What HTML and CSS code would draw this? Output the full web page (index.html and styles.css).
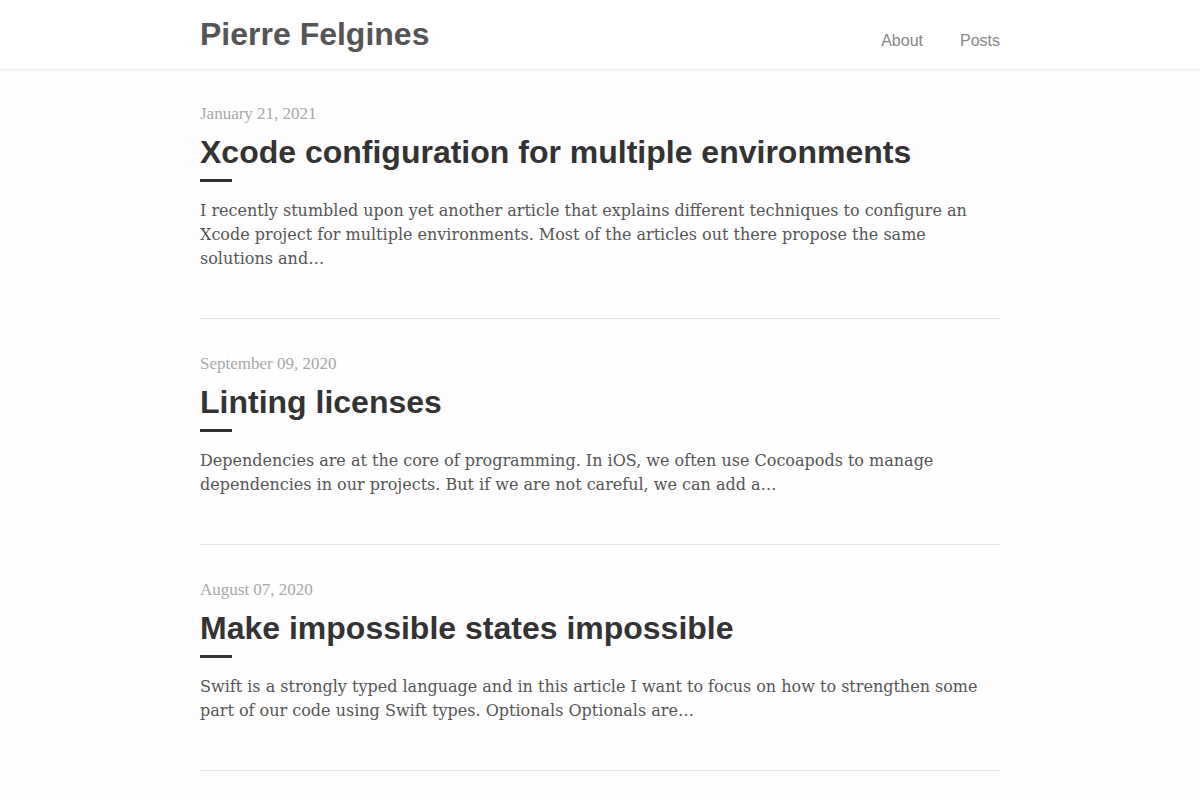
FILE: index.html
```html
<!DOCTYPE html>
<html lang="en">
    <head>
        <meta charset="UTF-8" />
        <meta name="viewport" content="width=device-width, initial-scale=1" />
        <title>Pierre Felgines</title>
        <link rel="stylesheet" href="styles.css">
    </head>
    <body>
        <header class="site-header">
            <div class="wrapper header-inner">
                <a class="site-title" href="#">Pierre Felgines</a>
                <nav class="site-nav">
                    <a href="#">About</a>
                    <a href="#">Posts</a>
                </nav>
            </div>
        </header>

        <main class="wrapper">
            <article class="post">
                <p class="post-date">January 21, 2021</p>
                <h2 class="post-title"><a href="#">Xcode configuration for multiple environments</a></h2>
                <p class="post-excerpt">
                    I recently stumbled upon yet another article that explains different techniques to configure an
                    Xcode project for multiple environments. Most of the articles out there propose the same
                    solutions and…
                </p>
            </article>
            <article class="post">
                <p class="post-date">September 09, 2020</p>
                <h2 class="post-title"><a href="#">Linting licenses</a></h2>
                <p class="post-excerpt">
                    Dependencies are at the core of programming. In iOS, we often use Cocoapods to manage
                    dependencies in our projects. But if we are not careful, we can add a…
                </p>
            </article>
            <article class="post">
                <p class="post-date">August 07, 2020</p>
                <h2 class="post-title"><a href="#">Make impossible states impossible</a></h2>
                <p class="post-excerpt">
                    Swift is a strongly typed language and in this article I want to focus on how to strengthen some
                    part of our code using Swift types. Optionals Optionals are…
                </p>
            </article>
        </main>
    </body>
</html>
```

FILE: styles.css
```css
/* Reset */
* {
    box-sizing: border-box;
    margin: 0;
    padding: 0;
}
body {
    font-family: "Liberation Serif", serif;
    background: #fefefe;
    color: #444;
}
a {
    color: inherit;
    text-decoration: none;
}
.wrapper {
    width: 800px;
    margin: 0 auto;
}

/* Header */
.site-header {
    background: #fff;
    border-bottom: 1px solid #ececec;
    box-shadow: 0 1px 3px rgba(0, 0, 0, 0.03);
}
.header-inner {
    height: 69px;
    display: flex;
    align-items: flex-start;
    justify-content: space-between;
}
.site-title {
    margin-top: 16px;
    font-family: "Liberation Sans", Arial, sans-serif;
    font-size: 32px;
    line-height: 37px;
    font-weight: 700;
    color: #555;
}
.site-nav {
    display: flex;
    gap: 37px;
    margin-top: 32px;
}
.site-nav a {
    font-family: "Liberation Sans", Arial, sans-serif;
    font-size: 16px;
    line-height: 18px;
    color: #888;
}

/* Posts */
.post {
    padding: 34px 0 47px;
    border-bottom: 1px solid #e3e3e3;
}
.post + .post {
    padding-top: 35px;
}
.post-date {
    font-size: 17px;
    line-height: 20px;
    color: #a8a8a8;
}
.post-title {
    margin-top: 8px;
    font-family: "Liberation Sans", Arial, sans-serif;
    font-size: 32px;
    line-height: 40px;
    font-weight: 700;
    color: #333;
}
.post-title::after {
    content: "";
    display: block;
    width: 32px;
    height: 3px;
    margin-top: 7px;
    background: #333;
}
.post-excerpt {
    margin-top: 17px;
    font-family: "DejaVu Serif", serif;
    font-size: 16px;
    line-height: 24px;
    color: #555;
}
```
